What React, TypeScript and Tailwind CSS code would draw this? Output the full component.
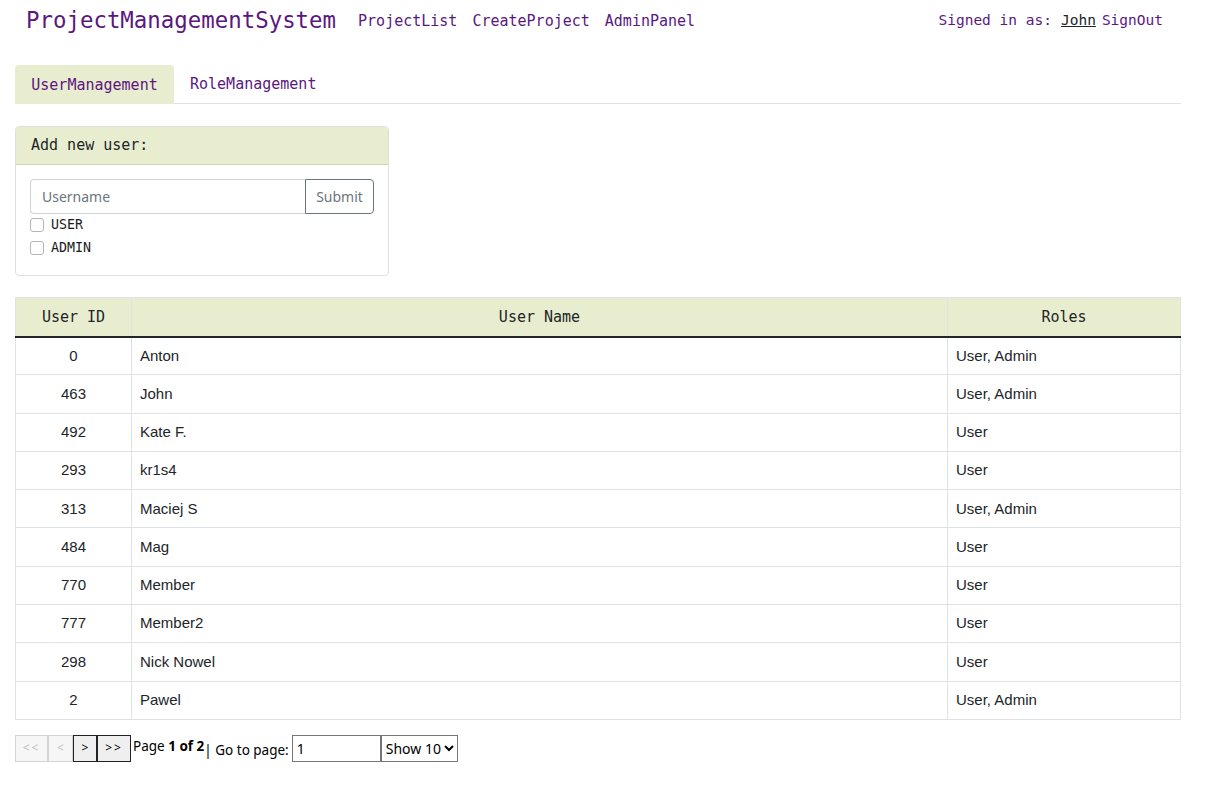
import React from 'react';

const users = [
  { id: 0, name: 'Anton', roles: 'User, Admin' },
  { id: 463, name: 'John', roles: 'User, Admin' },
  { id: 492, name: 'Kate F.', roles: 'User' },
  { id: 293, name: 'kr1s4', roles: 'User' },
  { id: 313, name: 'Maciej S', roles: 'User, Admin' },
  { id: 484, name: 'Mag', roles: 'User' },
  { id: 770, name: 'Member', roles: 'User' },
  { id: 777, name: 'Member2', roles: 'User' },
  { id: 298, name: 'Nick Nowel', roles: 'User' },
  { id: 2, name: 'Pawel', roles: 'User, Admin' },
];

const mono = "font-['DejaVu_Sans_Mono',monospace]";

export default function App() {
  return (
    <div className="min-h-[786px] bg-white pl-[15px] pr-[25px] text-[#212529]">
      {/* top nav */}
      <div className={`flex h-[42px] items-center justify-between ${mono}`}>
        <div className="flex items-center">
          <span className="ml-[11px] text-[22.4px] text-[#5b1780]">ProjectManagementSystem</span>
          <div className="ml-[22px] flex gap-[15px] text-[15px] text-[#5b1780]">
            <span>ProjectList</span>
            <span>CreateProject</span>
            <span>AdminPanel</span>
          </div>
        </div>
        <div className="mr-[18px] flex items-center text-[14.5px] text-[#5b1780]">
          <span>Signed in as:</span>
          <span className="ml-[9px] text-[#212529] underline">John</span>
          <span className="ml-[6px]">SignOut</span>
        </div>
      </div>

      {/* tabs */}
      <div className={`mt-[23px] flex border-b border-[#dee2e6] ${mono} text-[15px] text-[#5b1780]`}>
        <div className="-mb-px flex h-[39px] w-[159px] items-center justify-center rounded-t-[4px] border border-b-0 border-[#e9edcf] bg-[#e9edcf]">
          UserManagement
        </div>
        <div className="flex h-[38px] items-center px-[16px]">RoleManagement</div>
      </div>

      {/* add user card */}
      <div className="mt-[22px] w-[374px] overflow-hidden rounded-[4px] border border-[#dfdfdf]">
        <div className={`flex h-[38px] items-center border-b border-[#d2d5b8] bg-[#e9edcf] px-[15px] ${mono} text-[15px]`}>
          Add new user:
        </div>
        <div className="px-[14px] pb-[19px] pt-[14px]">
          <div className="flex h-[35px]">
            <input
              placeholder="Username"
              className="h-full flex-1 rounded-l-[4px] border border-r-0 border-[#ced4da] px-[11px] font-['Noto_Sans',sans-serif] text-[14px] placeholder:text-[#6c757d] focus:outline-none"
            />
            <button className="h-full w-[69px] rounded-r-[4px] border border-[#6c757d] font-['Noto_Sans',sans-serif] text-[14px] text-[#6c757d]">
              Submit
            </button>
          </div>
          <div className={`mt-[2px] flex flex-col gap-[6px] ${mono} text-[13.3px] text-[#1a1a1a]`}>
            {['USER', 'ADMIN'].map((r) => (
              <label key={r} className="flex h-[17px] items-center gap-[7px]">
                <span className="h-[14px] w-[14px] rounded-[3px] border border-[#b5b5b5] bg-white" />
                {r}
              </label>
            ))}
          </div>
        </div>
      </div>

      {/* users table */}
      <table className="mt-[21px] w-full border-collapse font-['Liberation_Sans',Arial,sans-serif] text-[15px]">
        <thead>
          <tr className={`h-[39px] bg-[#e9edcf] ${mono} text-[15px]`}>
            <th className="w-[116px] border border-b-2 border-[#dee2e6] border-b-[#212529] font-normal">User ID</th>
            <th className="border border-b-2 border-[#dee2e6] border-b-[#212529] font-normal">User Name</th>
            <th className="w-[233px] border border-b-2 border-[#dee2e6] border-b-[#212529] font-normal">Roles</th>
          </tr>
        </thead>
        <tbody>
          {users.map((u) => (
            <tr key={u.id} className="h-[38.3px]">
              <td className="border border-[#dee2e6] text-center">{u.id}</td>
              <td className="border border-[#dee2e6] px-[8px]">{u.name}</td>
              <td className="border border-[#dee2e6] px-[8px]">{u.roles}</td>
            </tr>
          ))}
        </tbody>
      </table>

      {/* pagination */}
      <div className="mt-[15px] flex items-start font-['Noto_Sans',sans-serif] text-[13.5px] text-black">
        <button className="h-[27px] w-[33px] border border-[#d4d4d4] bg-[#f6f6f6] text-[12px] tracking-[2px] text-[#c0c0c0]">&lt;&lt;</button>
        <button className="h-[27px] w-[25px] border border-[#d4d4d4] bg-[#f6f6f6] text-[12px] text-[#c0c0c0]">&lt;</button>
        <button className="h-[27px] w-[24px] border border-[#222] bg-[#efefef] text-[12px]">&gt;</button>
        <button className="h-[27px] w-[34px] border border-[#222] bg-[#efefef] text-[12px] tracking-[2px]">&gt;&gt;</button>
        <span className="ml-[2px] leading-[22px]">
          Page <b>1 of 2</b>
        </span>
        <span className="mt-[4px] leading-[22px]">| Go to page:</span>
        <input
          defaultValue="1"
          className="ml-[3px] h-[27px] w-[89px] border border-[#767676] px-[4px] text-[14px] focus:outline-none"
        />
        <select className="h-[27px] w-[77px] border border-[#767676] bg-white text-[14px]">
          <option>Show 10</option>
        </select>
      </div>
    </div>
  );
}
